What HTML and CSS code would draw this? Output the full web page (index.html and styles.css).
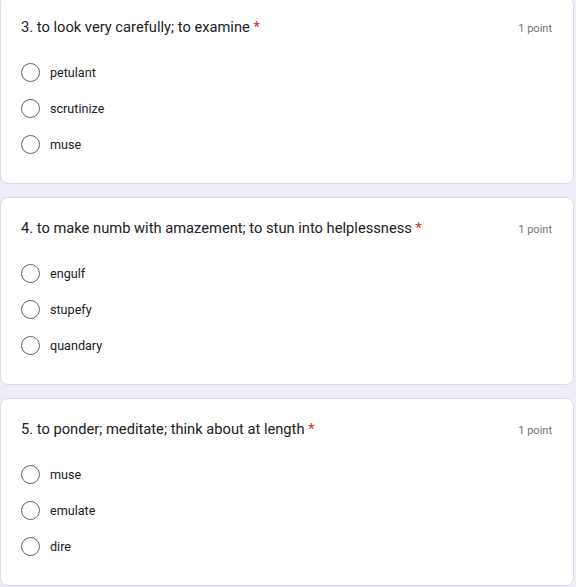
FILE: index.html
```html
<!DOCTYPE html>
<html lang="en">
<head>
<meta charset="utf-8">
<title>Quiz</title>
<link rel="stylesheet" href="styles.css">
</head>
<body>
<main class="page">
  <section class="card first">
    <div class="head">
      <h2 class="title">3. to look very carefully; to examine <span class="req">*</span></h2>
      <span class="points">1 point</span>
    </div>
    <ul class="options">
      <li class="option"><span class="radio"></span><span class="label">petulant</span></li>
      <li class="option"><span class="radio"></span><span class="label">scrutinize</span></li>
      <li class="option"><span class="radio"></span><span class="label">muse</span></li>
    </ul>
  </section>
  <section class="card">
    <div class="head">
      <h2 class="title">4. to make numb with amazement; to stun into helplessness <span class="req">*</span></h2>
      <span class="points">1 point</span>
    </div>
    <ul class="options">
      <li class="option"><span class="radio"></span><span class="label">engulf</span></li>
      <li class="option"><span class="radio"></span><span class="label">stupefy</span></li>
      <li class="option"><span class="radio"></span><span class="label">quandary</span></li>
    </ul>
  </section>
  <section class="card">
    <div class="head">
      <h2 class="title">5. to ponder; meditate; think about at length <span class="req">*</span></h2>
      <span class="points">1 point</span>
    </div>
    <ul class="options">
      <li class="option"><span class="radio"></span><span class="label">muse</span></li>
      <li class="option"><span class="radio"></span><span class="label">emulate</span></li>
      <li class="option"><span class="radio"></span><span class="label">dire</span></li>
    </ul>
  </section>
</main>
</body>
</html>
```
FILE: styles.css
```css
html, body {
  margin: 0;
  padding: 0;
  background: #f0ebf8;
  font-family: Roboto, "Liberation Sans", Arial, sans-serif;
  overflow: hidden;
}
.page {
  display: flex;
  flex-direction: column;
  gap: 13px;
  width: 574px;
}
.card {
  box-sizing: border-box;
  height: 188px;
  background: #fff;
  border: 1px solid #dadce0;
  border-radius: 8px;
  padding: 19px 21px 0 20px;
}
.card.first {
  margin-top: -4px;
}
.head {
  display: flex;
  align-items: baseline;
  justify-content: space-between;
  height: 22px;
}
.title {
  margin: 0;
  font-size: 14.7px;
  font-weight: 400;
  color: #202124;
  line-height: 22px;
}
.req {
  color: #d93025;
}
.points {
  font-size: 11px;
  color: #70757a;
}
.options {
  list-style: none;
  margin: 16px 0 0;
  padding: 0;
}
.option {
  display: flex;
  align-items: center;
  height: 36px;
}
.radio {
  box-sizing: border-box;
  width: 19px;
  height: 19px;
  border: 1.5px solid #5f6368;
  border-radius: 50%;
  margin-right: 10px;
  flex: none;
}
.label {
  font-size: 12.6px;
  color: #202124;
}
```
